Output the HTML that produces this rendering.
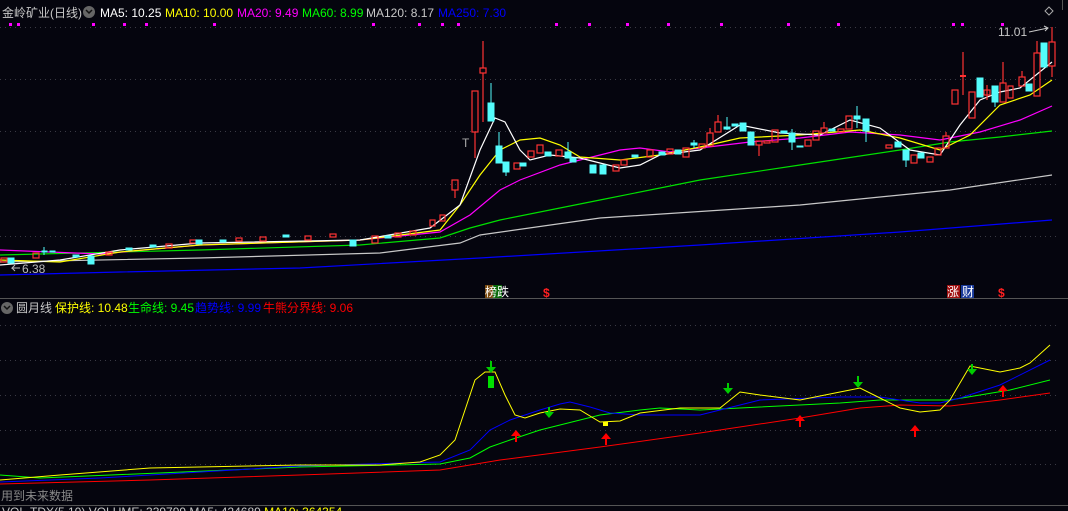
<!DOCTYPE html>
<html><head><meta charset="utf-8"><style>
html,body{margin:0;padding:0;background:#05050e;width:1068px;height:511px;overflow:hidden}
svg{display:block}
text{font-family:"Liberation Sans","Noto Sans CJK SC",sans-serif;font-size:12px}
</style></head><body>
<svg width="1068" height="511" viewBox="0 0 1068 511" xmlns="http://www.w3.org/2000/svg">
<rect width="1068" height="511" fill="#05050e"/>
<g stroke="#3a3a44" stroke-dasharray="1,4" stroke-width="1">
<line x1="0" y1="27.5" x2="1058" y2="27.5"/><line x1="0" y1="79.5" x2="1058" y2="79.5"/>
<line x1="0" y1="131.5" x2="1058" y2="131.5"/><line x1="0" y1="184.5" x2="1058" y2="184.5"/>
<line x1="0" y1="236.5" x2="1058" y2="236.5"/>
<line x1="0" y1="325.5" x2="1058" y2="325.5"/><line x1="0" y1="360.5" x2="1058" y2="360.5"/>
<line x1="0" y1="395.5" x2="1058" y2="395.5"/><line x1="0" y1="430.5" x2="1058" y2="430.5"/>
<line x1="0" y1="464.5" x2="1058" y2="464.5"/>
</g>
<line x1="0" y1="298.5" x2="1068" y2="298.5" stroke="#555" />
<line x1="0" y1="505.5" x2="1068" y2="505.5" stroke="#555" />
<line x1="1062.5" y1="0" x2="1062.5" y2="10" stroke="#555"/>
<text x="2" y="17" fill="#c8c8c8">金岭矿业(日线)</text>
<circle cx="89" cy="12" r="6" fill="#666"/><path d="M86 10l3 3 3-3" stroke="#111" fill="none" stroke-width="1.5"/>
<text x="100" y="17" fill="#ffffff">MA5: 10.25</text>
<text x="165" y="17" fill="#ffff00">MA10: 10.00</text>
<text x="237" y="17" fill="#ff00ff">MA20: 9.49</text>
<text x="302" y="17" fill="#00ff00">MA60: 8.99</text>
<text x="366" y="17" fill="#c8c8c8">MA120: 8.17</text>
<text x="438" y="17" fill="#0000ff">MA250: 7.30</text>
<g fill="#ff00ff">
<rect x="9" y="23" width="3" height="3"/><rect x="17" y="23" width="3" height="3"/><rect x="92" y="23" width="3" height="3"/><rect x="123" y="23" width="3" height="3"/><rect x="145" y="23" width="3" height="3"/><rect x="213" y="23" width="3" height="3"/><rect x="372" y="23" width="3" height="3"/><rect x="418" y="23" width="3" height="3"/><rect x="441" y="23" width="3" height="3"/><rect x="457" y="23" width="3" height="3"/><rect x="555" y="23" width="3" height="3"/><rect x="588" y="23" width="3" height="3"/><rect x="626" y="23" width="3" height="3"/><rect x="667" y="23" width="3" height="3"/><rect x="720" y="23" width="3" height="3"/><rect x="787" y="23" width="3" height="3"/><rect x="837" y="23" width="3" height="3"/><rect x="952" y="23" width="3" height="3"/><rect x="961" y="23" width="3" height="3"/><rect x="1001" y="23" width="3" height="3"/>
</g>
<path d="M1049 7l4 4-4 4-4-4z" stroke="#aaa" fill="none"/>
<g fill="none" stroke-width="1.2">
<polyline stroke="#0000ff" points="0,275 120,272 300,268 480,258 700,245 900,232 1052,220"/>
<polyline stroke="#c8c8c8" points="0,262 200,258 380,253 460,243 480,235 600,218 800,205 950,190 1052,175"/>
<polyline stroke="#00e000" points="0,255 200,250 360,245 440,238 470,228 500,220 600,200 700,180 800,165 900,150 950,142 1000,137 1052,131"/>
<polyline stroke="#ff00ff" points="0,250 100,254 200,245 360,240 440,232 470,215 500,190 520,180 560,165 620,150 640,148 670,152 700,148 750,142 800,138 850,132 900,135 940,140 980,132 1020,120 1052,106"/>
<polyline stroke="#ffff00" points="0,260 60,262 120,252 200,245 360,240 440,230 460,205 480,175 500,150 520,140 540,138 560,145 580,157 620,160 660,155 700,147 740,138 800,135 860,130 900,138 940,150 970,135 1000,105 1030,95 1052,80"/>
<polyline stroke="#ffffff" points="0,265 60,260 120,250 200,243 360,240 430,228 460,205 480,150 495,118 505,122 520,150 530,160 550,155 580,158 600,163 620,168 640,165 660,155 700,150 740,125 780,133 820,135 850,120 880,128 910,150 940,155 960,125 980,100 1000,92 1020,88 1052,62"/>
</g>
<g stroke="#ff3232" fill="none" stroke-width="1.2">
<rect x="1" y="258" width="6" height="4"/><rect x="33" y="253" width="6" height="5"/><rect x="106" y="252" width="6" height="3"/><rect x="166" y="244" width="6" height="4"/><rect x="190" y="240" width="6" height="3"/><rect x="236" y="238" width="6" height="3"/><rect x="260" y="237" width="6" height="4"/><rect x="305" y="236" width="6" height="4"/><rect x="330" y="234" width="6" height="3"/><rect x="372" y="236" width="6" height="7"/><rect x="395" y="233" width="6" height="4"/><rect x="410" y="231" width="6" height="4"/><rect x="430" y="220" width="5" height="6"/><rect x="440" y="215" width="5" height="6"/>
<rect x="452" y="180" width="6" height="10"/><line x1="455" y1="190" x2="455" y2="198"/>
<rect x="472" y="91" width="6" height="41"/><line x1="475" y1="132" x2="475" y2="158"/>
<rect x="480" y="68" width="6" height="5"/><line x1="483" y1="41" x2="483" y2="68"/><line x1="483" y1="73" x2="483" y2="122"/>
<rect x="514" y="163" width="6" height="6"/><rect x="528" y="151" width="6" height="6"/><rect x="537" y="145" width="6" height="8"/><rect x="556" y="150" width="6" height="6"/><rect x="613" y="165" width="6" height="6"/><rect x="621" y="160" width="6" height="5"/>
<rect x="647" y="150" width="6" height="7"/><rect x="667" y="149" width="6" height="5"/><rect x="683" y="148" width="6" height="9"/><rect x="699" y="144" width="6" height="4"/>
<rect x="707" y="133" width="6" height="13"/><line x1="710" y1="128" x2="710" y2="133"/>
<rect x="715" y="122" width="6" height="10"/><line x1="718" y1="115" x2="718" y2="122"/>
<rect x="756" y="141" width="6" height="4"/><line x1="759" y1="145" x2="759" y2="156"/>
<rect x="764" y="141" width="6" height="2"/><rect x="772" y="130" width="6" height="12"/>
<rect x="805" y="140" width="6" height="6"/><rect x="813" y="131" width="6" height="9"/><rect x="821" y="128" width="6" height="5"/><line x1="824" y1="122" x2="824" y2="128"/>
<rect x="838" y="129" width="6" height="3"/><rect x="846" y="116" width="6" height="13"/>
<rect x="886" y="145" width="6" height="3"/><rect x="911" y="155" width="6" height="8"/><rect x="927" y="157" width="6" height="5"/><rect x="935" y="148" width="6" height="7"/><rect x="943" y="136" width="6" height="12"/><line x1="946" y1="132" x2="946" y2="136"/>
<rect x="952" y="90" width="6" height="14"/>
<line x1="963" y1="52" x2="963" y2="95"/><line x1="960" y1="76" x2="966" y2="76" stroke-width="2"/>
<rect x="969" y="92" width="6" height="26"/>
<rect x="984" y="90" width="6" height="5"/><line x1="987" y1="85" x2="987" y2="100"/>
<rect x="1000" y="83" width="6" height="19"/><line x1="1003" y1="62" x2="1003" y2="83"/>
<rect x="1008" y="86" width="5" height="12"/>
<rect x="1019" y="77" width="6" height="9"/><line x1="1022" y1="71" x2="1022" y2="77"/>
<rect x="1034" y="53" width="6" height="43"/><line x1="1037" y1="41" x2="1037" y2="53"/>
<rect x="1049" y="42" width="6" height="24"/><line x1="1052" y1="27" x2="1052" y2="42"/><line x1="1052" y1="66" x2="1052" y2="77"/>
</g>
<g fill="#54fcfc" stroke="#54fcfc">
<rect x="8" y="258" width="6" height="5"/><rect x="88" y="256" width="6" height="8"/><rect x="42" y="251" width="5" height="1"/><line x1="44" y1="247" x2="44" y2="255"/><rect x="50" y="251" width="5" height="1"/><rect x="73" y="255" width="6" height="2"/><rect x="126" y="248" width="6" height="2"/><rect x="150" y="245" width="6" height="2"/><rect x="196" y="240" width="6" height="4"/><rect x="220" y="240" width="6" height="2"/><rect x="283" y="235" width="6" height="2"/><rect x="350" y="240" width="6" height="6"/><rect x="385" y="236" width="6" height="2"/>
<rect x="488" y="103" width="6" height="18"/><line x1="491" y1="83" x2="491" y2="103"/>
<rect x="496" y="146" width="6" height="17"/><line x1="499" y1="132" x2="499" y2="146"/>
<rect x="503" y="162" width="6" height="10"/><line x1="506" y1="172" x2="506" y2="176"/>
<rect x="520" y="163" width="6" height="3"/><rect x="545" y="152" width="6" height="4"/><rect x="565" y="152" width="6" height="6"/><line x1="568" y1="142" x2="568" y2="152"/>
<rect x="570" y="158" width="6" height="4"/><rect x="590" y="165" width="6" height="8"/><rect x="600" y="165" width="6" height="9"/><rect x="632" y="155" width="6" height="2"/>
<rect x="659" y="152" width="6" height="3"/><rect x="675" y="150" width="6" height="4"/><rect x="691" y="143" width="6" height="2"/><line x1="694" y1="140" x2="694" y2="148"/>
<rect x="724" y="127" width="6" height="2"/><line x1="727" y1="117" x2="727" y2="130"/>
<rect x="732" y="124" width="6" height="2"/><rect x="740" y="123" width="6" height="8"/><rect x="748" y="132" width="6" height="13"/>
<rect x="781" y="131" width="6" height="2"/><rect x="789" y="133" width="6" height="9"/><line x1="792" y1="129" x2="792" y2="150"/>
<rect x="797" y="146" width="6" height="1"/><rect x="829" y="129" width="6" height="2"/>
<rect x="854" y="116" width="6" height="3"/><line x1="857" y1="106" x2="857" y2="128"/>
<rect x="863" y="119" width="6" height="12"/><line x1="866" y1="131" x2="866" y2="142"/>
<rect x="895" y="142" width="6" height="5"/><rect x="903" y="150" width="6" height="10"/><line x1="906" y1="160" x2="906" y2="167"/><rect x="918" y="153" width="6" height="5"/>
<rect x="977" y="78" width="6" height="19"/><rect x="992" y="86" width="6" height="16"/><line x1="995" y1="102" x2="995" y2="107"/>
<rect x="1026" y="84" width="6" height="7"/><rect x="1041" y="43" width="6" height="24"/>
</g>
<text x="462" y="147" fill="#aaa" font-size="11">T</text>
<text x="22" y="273" fill="#bbb">6.38</text><path d="M20 268h-8l3-3M12 268l3 3" stroke="#bbb" fill="none"/>
<text x="998" y="36" fill="#c8c8c8">11.01</text><path d="M1029 32l19-4m-4-2l4 2-3 3" stroke="#c8c8c8" fill="none"/>
<rect x="485" y="285" width="8" height="13" fill="#7a4a10"/><rect x="493" y="285" width="9" height="13" fill="#0a6a0a"/>
<text x="485" y="296" fill="#fff">榜跌</text>
<text x="543" y="297" fill="#ff2020" font-weight="bold">$</text>
<rect x="947" y="285" width="13" height="13" fill="#a01010"/><text x="947" y="296" fill="#fff">涨</text>
<rect x="961" y="285" width="13" height="13" fill="#1a3a9a"/><text x="962" y="296" fill="#fff">财</text>
<text x="998" y="297" fill="#ff2020" font-weight="bold">$</text>
<circle cx="7" cy="308" r="6" fill="#666"/><path d="M4 306l3 3 3-3" stroke="#111" fill="none" stroke-width="1.5"/>
<text x="16" y="312" fill="#c8c8c8">圆月线</text>
<text x="55" y="312" fill="#ffff00">保护线: 10.48</text>
<text x="128" y="312" fill="#00ff00">生命线: 9.45</text>
<text x="195" y="312" fill="#0000ff">趋势线: 9.99</text>
<text x="263" y="312" fill="#ff0000">牛熊分界线: 9.06</text>
<g fill="none" stroke-width="1">
<polyline stroke="#ff0000" points="0,484 150,480 300,475 440,470 500,460 600,447 700,433 800,418 860,408 900,405 950,406 1000,400 1050,393"/>
<polyline stroke="#00ff00" points="0,475 40,478 300,467 440,464 470,458 490,447 510,440 540,430 580,420 600,415 640,410 660,408 700,410 760,407 840,403 880,400 920,400 950,400 980,395 1010,390 1050,380"/>
<polyline stroke="#0000ff" points="0,482 100,478 300,466 440,462 470,450 490,430 510,420 540,410 560,404 570,402 590,407 610,413 640,415 700,415 760,400 840,397 880,397 920,403 940,403 960,398 1000,385 1050,360"/>
<polyline stroke="#ffff00" points="0,480 60,475 150,468 300,465 380,465 420,462 440,455 455,440 465,410 475,380 485,372 495,372 505,395 515,415 525,418 540,413 560,409 580,410 600,422 620,421 640,413 680,408 720,408 740,392 760,395 800,400 840,392 860,388 880,398 900,408 920,412 940,410 950,400 970,366 990,370 1000,372 1020,368 1030,363 1050,345"/>
</g>
<g fill="#00cc00" stroke="#00cc00" stroke-width="2">
<rect x="488" y="376" width="6" height="12" stroke="none" fill="#00e000"/>
<line x1="491" y1="361" x2="491" y2="368"/><path d="M486 367h10l-5 6z" stroke="none"/>
<line x1="549" y1="407" x2="549" y2="413"/><path d="M544 412h10l-5 6z" stroke="none"/>
<line x1="728" y1="383" x2="728" y2="389"/><path d="M723 388h10l-5 6z" stroke="none"/>
<line x1="858" y1="376" x2="858" y2="383"/><path d="M853 382h10l-5 6z" stroke="none"/>
<line x1="972" y1="364" x2="972" y2="370"/><path d="M967 369h10l-5 6z" stroke="none"/>
</g>
<g fill="#ff0000" stroke="#ff0000" stroke-width="2">
<path d="M511 436h10l-5-6z" stroke="none"/><line x1="516" y1="435" x2="516" y2="442"/>
<path d="M601 439h10l-5-6z" stroke="none"/><line x1="606" y1="438" x2="606" y2="445"/>
<path d="M795 421h10l-5-6z" stroke="none"/><line x1="800" y1="420" x2="800" y2="427"/>
<path d="M910 431h10l-5-6z" stroke="none"/><line x1="915" y1="430" x2="915" y2="437"/>
<path d="M998 391h10l-5-6z" stroke="none"/><line x1="1003" y1="390" x2="1003" y2="397"/>
</g>
<rect x="603" y="422" width="5" height="4" fill="#ffff00"/>
<text x="1" y="500" fill="#888">用到未来数据</text>
<text x="2" y="516" fill="#c8c8c8">VOL-TDX(5,10) VOLUME: 339799 MA5: 424689 <tspan fill="#ffff00">MA10: 364354</tspan></text>
</svg>
</body></html>
